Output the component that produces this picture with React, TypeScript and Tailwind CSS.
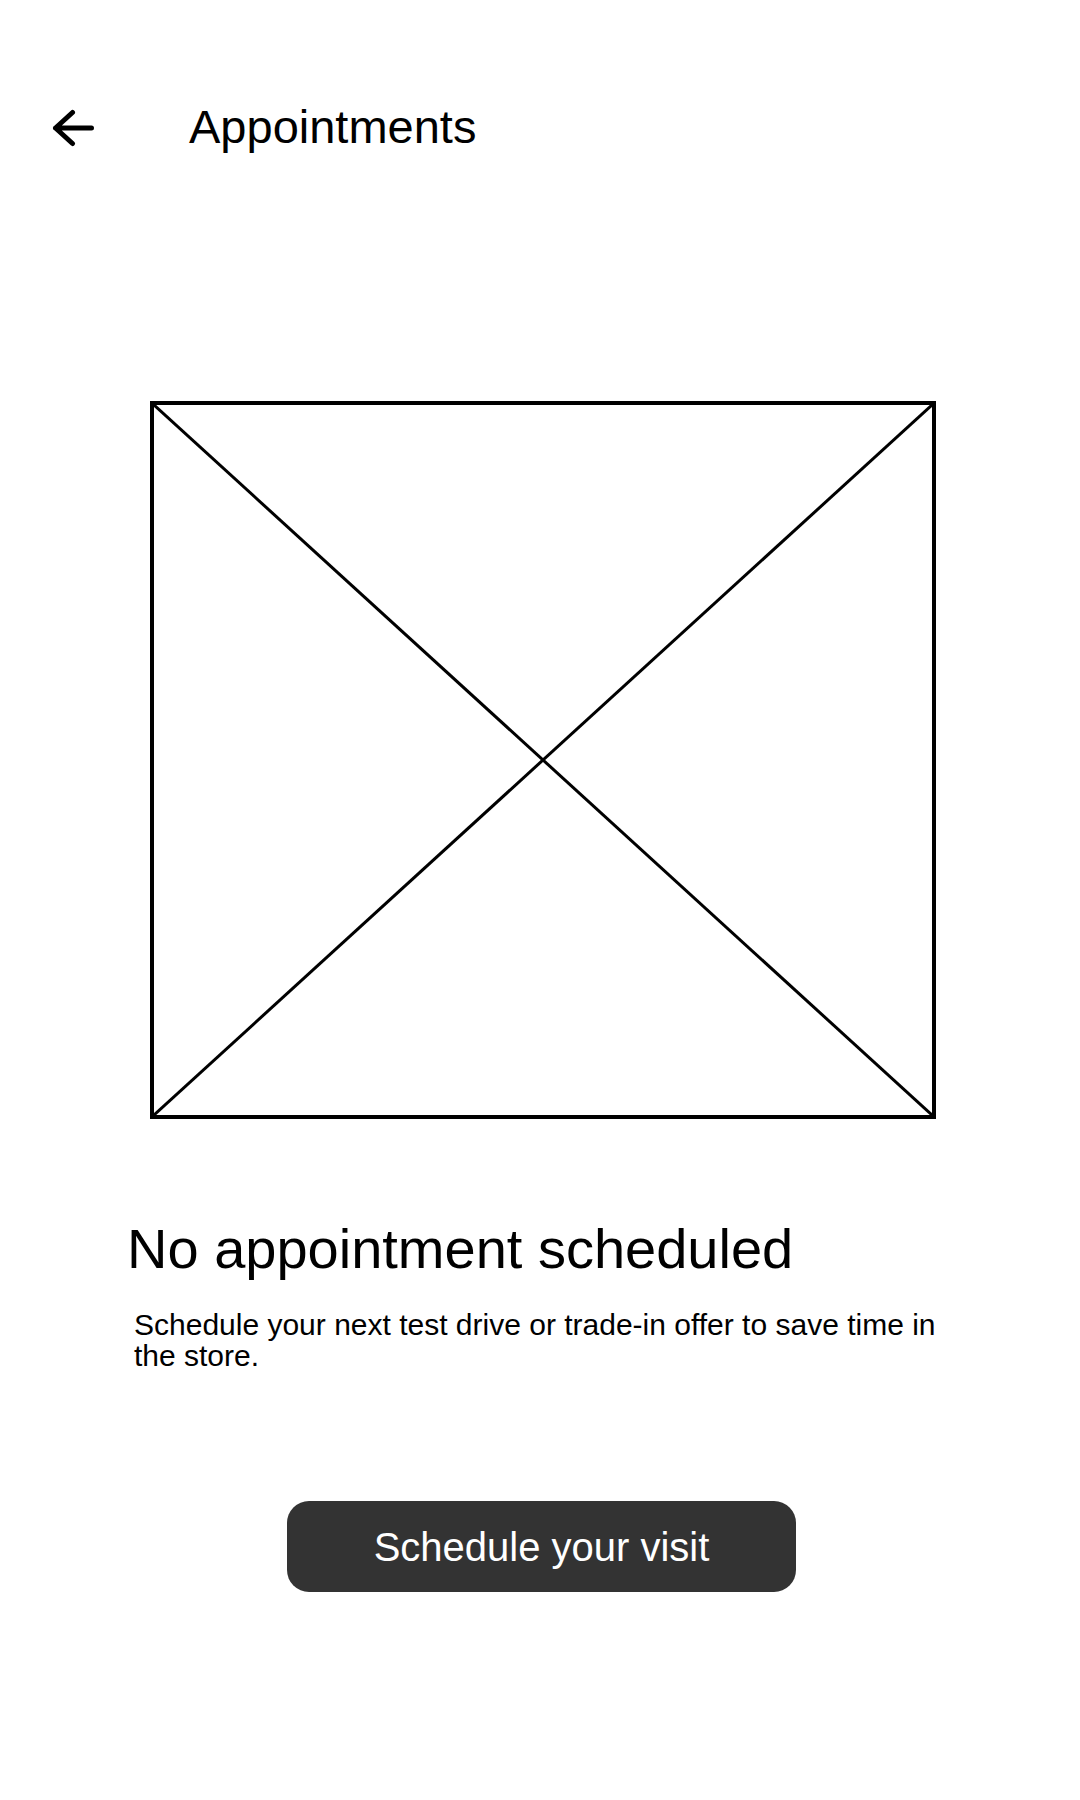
import React from 'react';

export default function App() {
	return (
		<div className="min-h-[1800px] w-[1080px] bg-white text-black font-['Liberation_Sans',Arial,sans-serif]">
			{/* header */}
			<div className="flex items-start pt-[103px]">
				<svg
					className="mt-[2px] ml-[52px] h-[46px] w-[46px] shrink-0"
					viewBox="0 0 46 46"
					fill="none"
					stroke="#000"
					strokeWidth={5}
					strokeLinecap="round"
					strokeLinejoin="round"
				>
					<path d="M20.5 7.5 L3.5 23 L20.5 38.5 M3.5 23 H39.5" />
				</svg>
				<h1 className="ml-[91px] text-[47px] leading-[47px] font-normal">Appointments</h1>
			</div>

			{/* placeholder picture */}
			<div className="relative mt-[250px] ml-[150px] h-[718px] w-[786px] border-4 border-black">
				<svg
					className="absolute inset-0 h-full w-full"
					viewBox="0 0 778 710"
					preserveAspectRatio="none"
				>
					<line x1="0" y1="0" x2="778" y2="710" stroke="#000" strokeWidth={3} />
					<line x1="778" y1="0" x2="0" y2="710" stroke="#000" strokeWidth={3} />
				</svg>
			</div>

			<h2 className="mt-[102px] ml-[127px] text-[56px] leading-[56px] font-normal">
				No appointment scheduled
			</h2>
			<p className="mt-[32px] ml-[134px] w-[812px] text-[30px] leading-[31px]">
				Schedule your next test drive or trade-in offer to save time in the store.
			</p>

			<button className="mt-[130px] ml-[287px] flex h-[91px] w-[509px] items-center justify-center rounded-[22px] bg-[#333333] text-[40px] leading-none text-white">
				Schedule your visit
			</button>
		</div>
	);
}
